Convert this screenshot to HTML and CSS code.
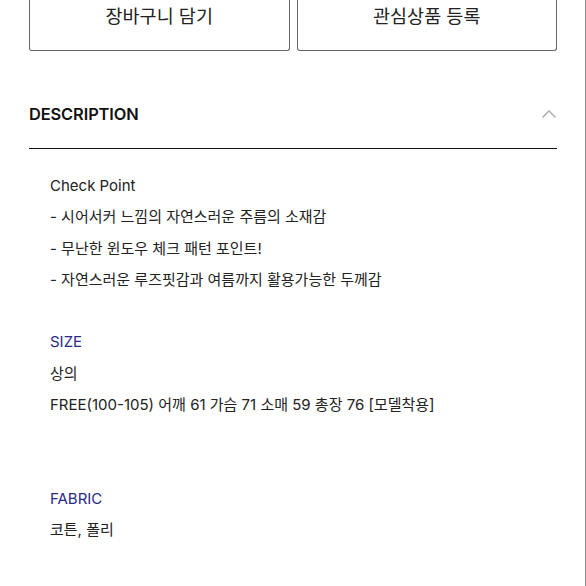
FILE: index.html
```html
<!DOCTYPE html>
<html lang="ko">
<head>
<meta charset="utf-8">
<link rel="stylesheet" href="styles.css">
</head>
<body>
<div class="page">
  <div class="actions">
    <button class="btn">장바구니 담기</button>
    <button class="btn">관심상품 등록</button>
  </div>
  <div class="section-head">
    <span class="section-title">DESCRIPTION</span>
    <svg class="chevron" width="16" height="10" viewBox="0 0 16 10"><path d="M1.5 8.5 L8 2 L14.5 8.5" fill="none" stroke="#a8a8a8" stroke-width="1.3"/></svg>
  </div>
  <div class="content">
    <p>Check Point</p>
    <p>- 시어서커 느낌의 자연스러운 주름의 소재감</p>
    <p>- 무난한 윈도우 체크 패턴 포인트!</p>
    <p>- 자연스러운 루즈핏감과 여름까지 활용가능한 두께감</p>
    <p>&nbsp;</p>
    <p class="label">SIZE</p>
    <p>상의</p>
    <p>FREE(100-105) 어깨 61 가슴 71 소매 59 총장 76 [모델착용]</p>
    <p>&nbsp;</p>
    <p>&nbsp;</p>
    <p class="label">FABRIC</p>
    <p>코튼, 폴리</p>
  </div>
</div>
</body>
</html>
```

FILE: styles.css
```css
html, body {
  margin: 0;
  padding: 0;
  background: #fff;
}
body {
  font-family: Inter, "Noto Sans CJK KR", sans-serif;
  color: #222;
  overflow: hidden;
}
.page {
  width: 585px;
  height: 586px;
  border-right: 1px solid #8a8a8a;
  box-sizing: content-box;
}
.actions {
  display: grid;
  grid-template-columns: 1fr 1fr;
  gap: 7px;
  padding: 0 28px 0 29px;
}
.btn {
  height: 51px;
  border: 1px solid #666;
  border-top: none;
  border-radius: 0 0 3px 3px;
  background: #fff;
  font-family: Inter, "Noto Sans CJK KR", sans-serif;
  font-size: 18.5px;
  color: #222;
  padding: 0 0 18px;
  margin: 0;
  display: flex;
  align-items: flex-start;
  justify-content: center;
  line-height: 32px;
}
.section-head {
  display: flex;
  align-items: center;
  justify-content: space-between;
  margin: 0 28px 0 29px;
  padding: 53px 0 24px;
  height: 20px;
  box-sizing: content-box;
  border-bottom: 1px solid #111;
}
.section-title {
  font-size: 16.4px;
  font-weight: 600;
  color: #111;
  letter-spacing: -0.1px;
}
.content {
  padding: 21px 0 0 50px;
  font-size: 15px;
  line-height: 31.3px;
}
.content p {
  margin: 0;
}
.label {
  color: #2a2a86;
}
```
